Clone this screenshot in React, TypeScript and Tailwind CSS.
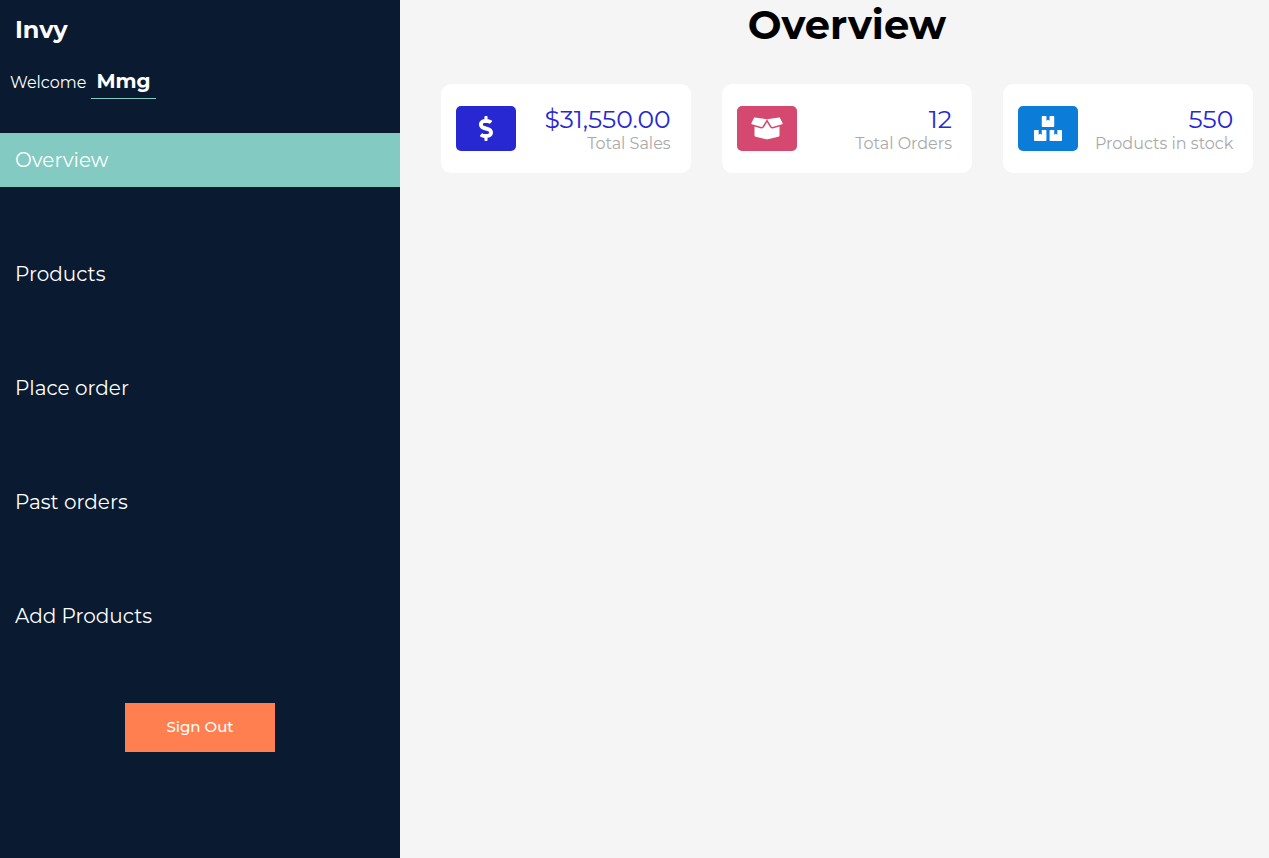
import { FaBoxOpen, FaBoxes, FaDollarSign } from "react-icons/fa";
import type { IconType } from "react-icons";

type Stat = { value: string; label: string; tile: string; Icon: IconType; iconWidth: string };

const links = ["Overview", "Products", "Place order", "Past orders", "Add Products"];

const stats: Stat[] = [
  { value: "$31,550.00", label: "Total Sales", tile: "bg-[#2728d2]", Icon: FaDollarSign, iconWidth: "w-[16px]" },
  { value: "12", label: "Total Orders", tile: "bg-[#d5486f]", Icon: FaBoxOpen, iconWidth: "w-[32px]" },
  { value: "550", label: "Products in stock", tile: "bg-[#0c7cd9]", Icon: FaBoxes, iconWidth: "w-[28px]" },
];

function Sidebar() {
  return (
    <aside className="w-[400px] shrink-0 bg-[#0a1a30] text-white">
      <div className="px-[15px] pt-[14px] text-2xl font-bold leading-8">Invy</div>
      <p className="mt-[19px] flex items-baseline pl-[10px] text-base leading-8">
        <span>Welcome</span>
        <span className="ml-[5px] border-b border-[#82cac2] px-[5px] pb-px text-xl font-bold leading-8">Mmg</span>
      </p>
      <nav className="mt-[34px] flex flex-col gap-[60px]">
        {links.map((link, i) => (
          <a
            key={link}
            href="#"
            aria-current={i === 0 ? "page" : undefined}
            className={`px-[15px] py-[13px] text-xl leading-7 ${i === 0 ? "bg-[#82cac2]" : ""}`}
          >
            {link}
          </a>
        ))}
      </nav>
      <button type="button" className="mx-auto mt-[60px] block h-[49px] w-[150px] bg-[#ff7f50] text-[15px] font-medium">
        Sign Out
      </button>
    </aside>
  );
}

function StatCard({ value, label, tile, Icon, iconWidth }: Stat) {
  return (
    <section className="flex h-[89px] w-[250px] items-center justify-between rounded-[10px] bg-white pl-[15px] pr-[20px]">
      <div className={`flex h-[45px] w-[60px] items-center justify-center rounded-[5px] text-white ${tile}`}>
        <Icon className={`h-[25px] ${iconWidth}`} />
      </div>
      <div className="text-right">
        <div className="text-[25px] leading-[30px] text-[#2728d2]">{value}</div>
        <div className="text-base leading-5 text-[#aaaaaa]">{label}</div>
      </div>
    </section>
  );
}

export default function App() {
  return (
    <div className="flex min-h-screen bg-[#f5f5f5] font-[Montserrat,Inter,sans-serif]">
      <Sidebar />
      <main className="min-w-0 flex-1 pl-[25px]">
        <h1 className="text-center text-[40px] font-bold leading-[50px] text-black">Overview</h1>
        <div className="mt-[34px] flex flex-wrap justify-around gap-y-6">
          {stats.map((s) => (
            <StatCard key={s.label} {...s} />
          ))}
        </div>
      </main>
    </div>
  );
}
